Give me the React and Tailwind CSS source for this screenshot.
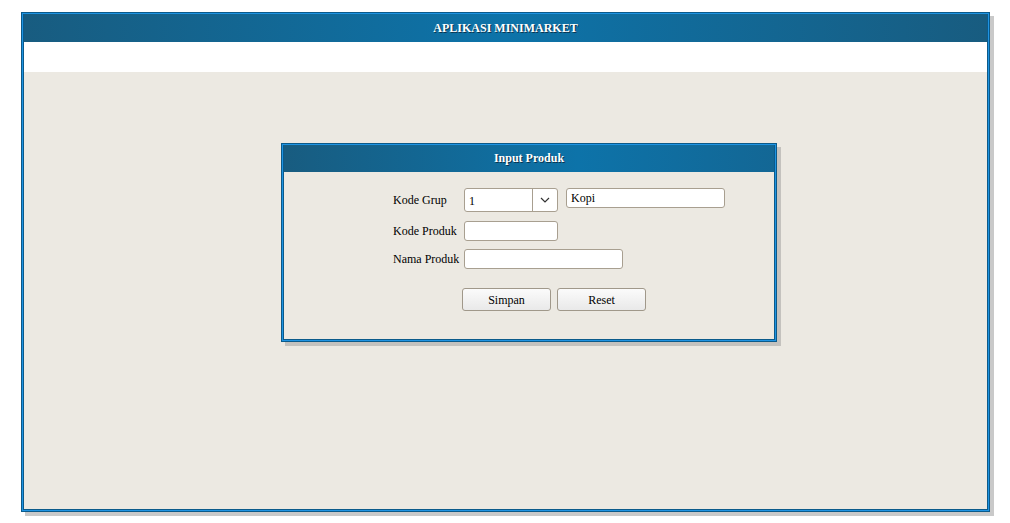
export default function App() {
  const font = { fontFamily: '"Liberation Serif", "Times New Roman", serif' };
  return (
    <div className="min-h-[523px] w-[1010px] bg-white pt-[12px] pl-[21px]" style={font}>
      {/* frame utama */}
      <div className="w-[969px] h-[500px] border border-[#0b5a8a] shadow-[4px_4px_0_#c9c9c9]">
        <div className="h-full border border-[#1e93e2] flex flex-col">
          <div className="flex-1 border border-[#0b5a8a] border-t-0 flex flex-col">
            <div className="h-[28px] flex items-center justify-center bg-[linear-gradient(90deg,#185c80,#0d73a9_50%,#185c80)] text-white text-[12px] font-bold [text-shadow:1px_1px_0_#0a3550]">
              APLIKASI MINIMARKET
            </div>
            <div className="h-[30px] bg-white" />
            <div className="flex-1 bg-[#ece9e2] pt-[71px] pl-[257px]">
              {/* panel input */}
              <div className="w-[496px] h-[199px] border border-[#0b5a8a] shadow-[4px_4px_0_#c4c2be]">
                <div className="h-full border border-[#1e93e2]">
                  <div className="h-full border border-[#0b5a8a] border-t-0 flex flex-col">
                    <div className="h-[27px] flex items-center justify-center pb-[1px] bg-[linear-gradient(90deg,#185c80,#0d73a9_60%,#136795)] text-white text-[12px] font-bold [text-shadow:1px_1px_0_#0a3550]">
                      Input Produk
                    </div>
                    <div className="flex-1 pt-[16px] pl-[109px] text-[12px] text-black">
                      <div className="flex items-center h-[24px]">
                        <span className="w-[71px]">Kode Grup</span>
                        <div className="w-[94px] h-[24px] flex bg-white border border-[#a89f90] rounded-[3px]">
                          <span className="flex-1 flex items-center pl-[4px] pt-[2px]">1</span>
                          <span className="w-[25px] border-l border-[#a89f90] flex items-center justify-center">
                            <svg width="10" height="6" viewBox="0 0 10 6">
                              <path d="M1 1l4 4 4-4" fill="none" stroke="#333" strokeWidth="1.2" />
                            </svg>
                          </span>
                        </div>
                        <div className="ml-[8px] w-[159px] h-[20px] -mt-[4px] bg-white border border-[#a89f90] rounded-[3px] flex items-center pl-[4px]">
                          Kopi
                        </div>
                      </div>
                      <div className="flex items-center mt-[9px] h-[20px]">
                        <span className="w-[71px]">Kode Produk</span>
                        <div className="w-[94px] h-[20px] bg-white border border-[#a89f90] rounded-[3px]" />
                      </div>
                      <div className="flex items-center mt-[8px] h-[20px]">
                        <span className="w-[71px]">Nama Produk</span>
                        <div className="w-[159px] h-[20px] bg-white border border-[#a89f90] rounded-[3px]" />
                      </div>
                      <div className="flex gap-[6px] mt-[19px] ml-[69px]">
                        <button className="w-[89px] h-[23px] rounded-[3px] border border-[#a0988a] bg-[linear-gradient(#fbfbfb,#e9e9e9)] text-[12px]">
                          Simpan
                        </button>
                        <button className="w-[89px] h-[23px] rounded-[3px] border border-[#a0988a] bg-[linear-gradient(#fbfbfb,#e9e9e9)] text-[12px]">
                          Reset
                        </button>
                      </div>
                    </div>
                  </div>
                </div>
              </div>
            </div>
          </div>
        </div>
      </div>
    </div>
  );
}
